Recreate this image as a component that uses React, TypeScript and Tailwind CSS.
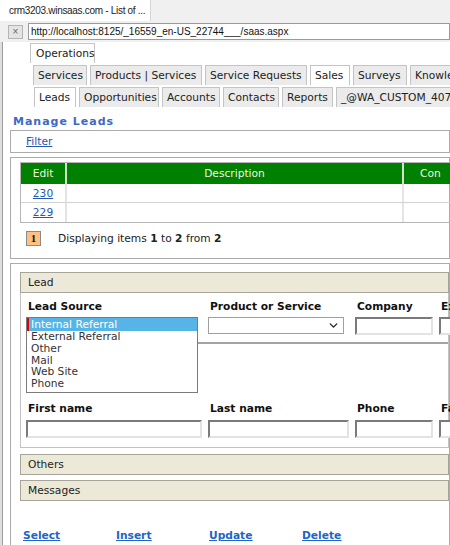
import { ChevronDown } from "lucide-react";

const row2 = [
  { label: "Services", w: "w-[54px]" },
  { label: "Products | Services", w: "w-[112px]" },
  { label: "Service Requests", w: "w-[102px]" },
  { label: "Sales", w: "w-[40px]", active: true },
  { label: "Surveys", w: "w-[54px]" },
  { label: "Knowledge Base", w: "w-[96px]" },
];

const row3 = [
  { label: "Leads", w: "w-[42px]", active: true },
  { label: "Opportunities", w: "w-[80px]" },
  { label: "Accounts", w: "w-[58px]" },
  { label: "Contacts", w: "w-[56px]" },
  { label: "Reports", w: "w-[51px]" },
  { label: "_@WA_CUSTOM_4071", w: "w-[120px]" },
];

const sources = ["Internal Referral", "External Referral", "Other", "Mail", "Web Site", "Phone"];

function Tab({ label, w, active }: { label: string; w: string; active?: boolean }) {
  return (
    <div
      className={`${w} shrink-0 h-[20px] pl-[4px] flex items-center whitespace-nowrap overflow-hidden border border-b-0 border-[#c4c4c4] text-[#222] ${
        active ? "bg-white" : "bg-[#ebebeb]"
      }`}
    >
      {label}
    </div>
  );
}

function Input({ w }: { w: string }) {
  return (
    <div className={`${w} shrink-0 h-[18px] bg-white border-2 border-t-[#7a7a7a] border-l-[#7a7a7a] border-b-[#e3e3e3] border-r-[#e3e3e3]`} />
  );
}

function Bar({ label }: { label: string }) {
  return (
    <div className="h-[21px] flex items-center pl-[7px] bg-[#ece9d8] border border-[#a7a597] text-[#222]">
      {label}
    </div>
  );
}

export default function App() {
  return (
    <div className="w-[450px] h-[545px] overflow-hidden bg-white text-[10.67px] leading-[13px] text-[#111] font-['DejaVu_Sans',sans-serif]">
      {/* window chrome */}
      <div className="h-[21px] bg-[#f0f0f0] flex font-['Liberation_Sans',Arial,sans-serif]">
        <div className="w-[151px] bg-white border-r border-[#d6d6d6] pl-[9px] flex items-center text-[10px] tracking-[-0.3px] text-[#222] whitespace-nowrap">
          crm3203.winsaas.com - List of ...
        </div>
      </div>
      <div className="h-[21px] bg-[#f0f0f0] flex items-center font-['Liberation_Sans',Arial,sans-serif]">
        <div className="ml-[8px] w-[15px] h-[14px] bg-[#e4e4e4] border border-[#b4b4b4] flex items-center justify-center text-[10px] text-[#666] leading-none">
          ×
        </div>
        <div className="ml-[5px] flex-1 h-[17px] bg-white border border-[#9a9a9a] pl-[2px] flex items-center text-[10px] text-[#111] whitespace-nowrap">
          http://localhost:8125/_16559_en-US_22744___/saas.aspx
        </div>
      </div>

      <div className="h-[503px] border-l-2 border-[#dedede]">
        <div className="h-full border-l border-[#9c9c9c] pl-[7px]">
          {/* tabs */}
          <div className="pt-[1px] pl-[20px] flex">
            <div className="w-[65px] h-[20px] pl-[5px] flex items-center bg-white border border-b-0 border-[#c4c4c4] text-[#222]">
              Operations
            </div>
          </div>
          <div className="mt-[2px] pl-[23px] flex gap-[3px]">
            {row2.map((t) => (
              <Tab key={t.label} {...t} />
            ))}
          </div>
          <div className="mt-[2px] pl-[24px] flex gap-[3px]">
            {row3.map((t) => (
              <Tab key={t.label} {...t} />
            ))}
          </div>

          <div className="mt-[8px] h-[13px] pl-[3px] font-bold text-[11px] leading-[13px] tracking-[1px] text-[#3e69c6]">
            Manage Leads
          </div>

          <div className="mt-[2px] h-[23px] border border-[#ababab] pl-[15px] flex items-center">
            <a className="text-[#2458b3] underline">Filter</a>
          </div>

          {/* grid */}
          <div className="mt-[4px] h-[102px] border border-[#ababab] pl-[9px] pt-[4px]">
            <div className="border border-[#b5b5b5] w-[440px]">
              <div className="flex h-[21px] bg-[#008000] text-[#eef6dc]">
                <div className="w-[46px] flex items-center justify-center border-r-2 border-[#cfe3cf]">Edit</div>
                <div className="w-[337px] flex items-center justify-center border-r-2 border-[#cfe3cf]">Description</div>
                <div className="flex-1 flex items-center pl-[16px]">Con</div>
              </div>
              {["230", "229"].map((id, i) => (
                <div key={id} className={`flex h-[19px] ${i === 0 ? "border-b border-[#d2d2d2]" : ""}`}>
                  <div className="w-[46px] flex items-center justify-center border-r-2 border-[#e4e4e4]">
                    <a className="text-[#2458b3] underline">{id}</a>
                  </div>
                  <div className="w-[337px] border-r-2 border-[#e4e4e4]" />
                  <div className="flex-1" />
                </div>
              ))}
            </div>
            <div className="mt-[8px] h-[15px] flex items-center">
              <div className="ml-[6px] w-[15px] h-[15px] bg-[#ffc080] border border-[#8a8a8a] flex items-center justify-center font-bold font-['Liberation_Serif',serif] text-[11px]">
                1
              </div>
              <div className="ml-[17px] text-[#222]">
                Displaying items <b>1</b> to <b>2</b> from <b>2</b>
              </div>
            </div>
          </div>

          {/* lead form */}
          <div className="mt-[4px] h-[290px] border border-[#ababab] border-b-0 pl-[9px] pt-[8px]">
            <Bar label="Lead" />
            <div className="h-[155px] border border-t-0 border-[#c2c2c2] pl-[7px]">
              <div className="relative">
                <div className="pt-[7px] h-[20px] flex font-bold text-[#111]">
                  <div className="w-[182px] shrink-0">Lead Source</div>
                  <div className="w-[147px] shrink-0">Product or Service</div>
                  <div className="w-[84px] shrink-0">Company</div>
                  <div className="shrink-0">Ex</div>
                </div>
                <div className="mt-[4px] flex -ml-[2px]">
                  <div className="w-[172px] shrink-0 h-[17px] bg-white border border-[#a0a0a0] border-l-2 border-l-[#e00000]" />
                  <div className="ml-[10px] w-[136px] shrink-0 h-[17px] bg-white border border-[#a0a0a0] flex items-center justify-end pr-[3px]">
                    <ChevronDown className="w-[13px] h-[13px] text-[#222]" strokeWidth={2.5} />
                  </div>
                  <div className="ml-[11px]">
                    <Input w="w-[78px]" />
                  </div>
                  <div className="ml-[6px]">
                    <Input w="w-[40px]" />
                  </div>
                </div>
                <div className="mt-[7px] ml-[170px] h-[2px] bg-[#a3a3a3]" />

                {/* open dropdown */}
                <div className="absolute left-[-2px] top-[24px] w-[172px] h-[76px] bg-white border border-[#7b7b7b] text-[#333] leading-[11.8px]">
                  {sources.map((s, i) => (
                    <div
                      key={s}
                      className={
                        i === 0
                          ? "bg-[#56b4e6] text-white border-l-2 border-[#e00000] pl-[2px] h-[13px] leading-[13px]"
                          : "pl-[4px]"
                      }
                    >
                      {s}
                    </div>
                  ))}
                </div>

                <div className="mt-[58px] h-[13px] flex font-bold text-[#111]">
                  <div className="w-[182px] shrink-0">First name</div>
                  <div className="w-[147px] shrink-0">Last name</div>
                  <div className="w-[84px] shrink-0">Phone</div>
                  <div className="shrink-0">Fax</div>
                </div>
                <div className="mt-[5px] flex gap-[6px] -ml-[2px]">
                  <Input w="w-[176px]" />
                  <Input w="w-[141px]" />
                  <Input w="w-[78px]" />
                  <Input w="w-[40px]" />
                </div>
              </div>
            </div>
            <div className="mt-[6px]">
              <Bar label="Others" />
            </div>
            <div className="mt-[5px]">
              <Bar label="Messages" />
            </div>
            <div className="mt-[28px] ml-[3px] h-[13px] flex font-bold text-[#1f64c9] underline">
              <a className="w-[93px]">Select</a>
              <a className="w-[93px]">Insert</a>
              <a className="w-[93px]">Update</a>
              <a>Delete</a>
            </div>
          </div>
        </div>
      </div>
    </div>
  );
}
